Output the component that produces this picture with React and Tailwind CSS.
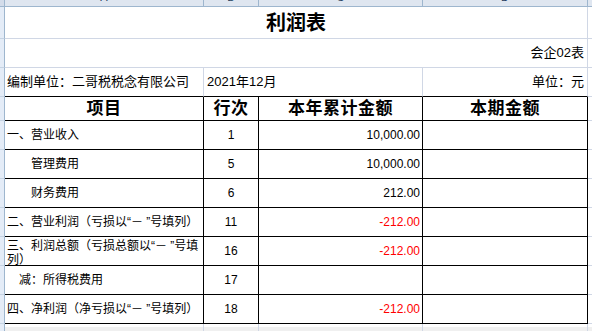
import React from "react";

// Excel-style profit statement (利润表) sheet view.
const FONT = { fontFamily: '"Liberation Sans", "Noto Sans CJK SC", sans-serif' };

const rows = [
  { name: "一、营业收入", pad: "pl-[2px]", no: "1", ytd: "10,000.00" },
  { name: "管理费用", pad: "pl-[26px]", no: "5", ytd: "10,000.00" },
  { name: "财务费用", pad: "pl-[26px]", no: "6", ytd: "212.00" },
  { name: "二、营业利润（亏损以“－ ”号填列）", pad: "pl-[2px]", no: "11", ytd: "-212.00", neg: true },
  { name: ["三、利润总额（亏损总额以“－ ”号填", "列）"], pad: "pl-[2px]", no: "16", ytd: "-212.00", neg: true },
  { name: "减：所得税费用", pad: "pl-[14px]", no: "17", ytd: "" },
  { name: "四、净利润（净亏损以“－ ”号填列）", pad: "pl-[2px]", no: "18", ytd: "-212.00", neg: true },
];

function RowHead() {
  return <div className="w-[5px] shrink-0 border-r border-b border-r-[#9eb6ce] border-b-[#c5d3e3] bg-[#e4ecf7]" />;
}

function Tail() {
  return <div className="flex-1 border-b border-[#d0d7e5]" />;
}

export default function App() {
  return (
    <div className="w-[592px] h-[331px] overflow-hidden bg-white text-black" style={FONT}>
      {/* column letters, mostly scrolled out of view */}
      <div className="flex h-[7px] bg-[#dfe6f0] text-[11px] text-[#27415f] leading-none">
        <div className="w-[5px] shrink-0 border-r border-b border-[#9eb6ce] bg-[#d3dcea]" />
        {[
          ["A", "w-[199px]"],
          ["B", "w-[55px]"],
          ["C", "w-[164px]"],
          ["D", "w-[165px]"],
        ].map(([l, w]) => (
          <div key={l} className={`${w} shrink-0 flex items-end justify-center pb-[3px] overflow-hidden border-r border-b border-[#9eb6ce]`}>
            <span>{l}</span>
          </div>
        ))}
        <div className="flex-1 border-b border-[#9eb6ce]" />
      </div>

      {/* title */}
      <div className="flex h-[32px]">
        <RowHead />
        <div className="w-[583px] shrink-0 flex items-center justify-center border-r border-b border-[#d0d7e5] text-[20px] font-bold">
          利润表
        </div>
        <Tail />
      </div>

      <div className="flex h-[29px] text-[13px]">
        <RowHead />
        <div className="w-[583px] shrink-0 flex items-center justify-end pr-[3px] border-r border-b border-[#d0d7e5]">
          会企02表
        </div>
        <Tail />
      </div>

      <div className="flex h-[29px] text-[13px]">
        <RowHead />
        <div className="w-[199px] shrink-0 flex items-center pl-[2px] border-r border-[#d0d7e5] border-b border-b-black">
          编制单位：二哥税税念有限公司
        </div>
        <div className="w-[219px] shrink-0 flex items-center pl-[3px] border-r border-[#d0d7e5] border-b border-b-black">
          2021年12月
        </div>
        <div className="w-[165px] shrink-0 flex items-center justify-end pr-[3px] border-r border-[#d0d7e5] border-b border-b-black">
          单位：元
        </div>
        <Tail />
      </div>

      {/* table header */}
      <div className="flex h-[24px] text-[17px] font-bold tracking-[0.5px]">
        <RowHead />
        <div className="w-[199px] shrink-0 flex items-center justify-center border-r border-b border-black">项目</div>
        <div className="w-[55px] shrink-0 flex items-center justify-center border-r border-b border-black">行次</div>
        <div className="w-[164px] shrink-0 flex items-center justify-center border-r border-b border-black">本年累计金额</div>
        <div className="w-[165px] shrink-0 flex items-center justify-center border-r border-b border-black">本期金额</div>
        <Tail />
      </div>

      {rows.map((r) => (
        <div key={r.no} className="flex h-[29px] text-[12px]">
          <RowHead />
          {Array.isArray(r.name) ? (
            <div className={`w-[199px] shrink-0 flex flex-col pt-[2px] leading-[14px] overflow-hidden border-r border-b border-black ${r.pad}`}>
              {r.name.map((t) => (
                <span key={t} className="whitespace-nowrap">{t}</span>
              ))}
            </div>
          ) : (
            <div className={`w-[199px] shrink-0 flex items-center whitespace-nowrap overflow-hidden border-r border-b border-black ${r.pad}`}>
              {r.name}
            </div>
          )}
          <div className="w-[55px] shrink-0 flex items-center justify-center border-r border-b border-black">{r.no}</div>
          <div className={`w-[164px] shrink-0 flex items-center justify-end pr-[2px] border-r border-b border-black ${r.neg ? "text-[#ff0000]" : ""}`}>
            {r.ytd}
          </div>
          <div className="w-[165px] shrink-0 border-r border-b border-black" />
          <Tail />
        </div>
      ))}

      {/* next row, cut off by the sheet tabs bar */}
      <div className="flex h-[8px]">
        <div className="w-[5px] shrink-0 border-r border-[#9eb6ce] bg-[#e4ecf7]" />
        {["w-[199px]", "w-[55px]", "w-[164px]", "w-[165px]"].map((w) => (
          <div key={w} className={`${w} shrink-0 flex flex-col border-r border-[#d0d7e5]`}>
            <div className="h-[3px] bg-white" />
            <div className="flex-1 bg-[#f0f0f0]" />
          </div>
        ))}
        <div className="flex-1 flex flex-col">
          <div className="h-[3px] bg-white" />
          <div className="flex-1 bg-[#f0f0f0]" />
        </div>
      </div>
    </div>
  );
}
